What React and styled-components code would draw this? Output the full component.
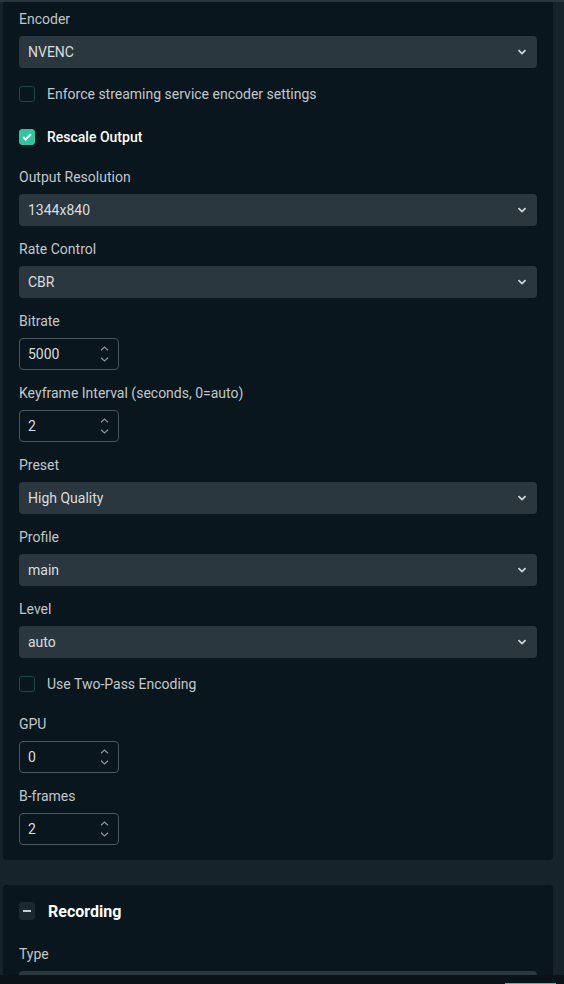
import React from 'react';
import styled, { createGlobalStyle } from 'styled-components';

const GlobalStyle = createGlobalStyle`
  html, body {
    margin: 0;
    padding: 0;
    background: #17232b;
    font-family: Roboto, "Liberation Sans", sans-serif;
  }
`;

const Page = styled.div`
  height: 984px;
  width: 564px;
  display: flex;
  flex-direction: column;
  overflow: hidden;
  background: #17232b;
`;

const TopBand = styled.div`
  height: 2px;
  flex-shrink: 0;
  background: #2a363e;
`;

const Scroll = styled.div`
  flex: 1;
  overflow: hidden;
  padding: 0 11px 0 3px;
  display: flex;
  flex-direction: column;
  gap: 25px;
`;

const Card = styled.section`
  background: #09161d;
  border-radius: ${p => (p.$flatTop ? '0 0 4px 4px' : '4px')};
  padding: ${p => (p.$flatTop ? '8px' : '17px')} 16px 1px;
  display: flex;
  flex-direction: column;
  flex-shrink: 0;
`;

const Field = styled.div`
  display: flex;
  flex-direction: column;
  margin-bottom: 14px;
`;

const Label = styled.div`
  font-size: 14px;
  line-height: 17px;
  padding-top: 1px;
  color: #c2c7ca;
  margin-bottom: 8px;
`;

const SelectBox = styled.div`
  height: 32px;
  border-radius: 4px;
  background: #2b373f;
  display: flex;
  align-items: center;
  justify-content: space-between;
  padding: 0 10px 0 9px;
  font-size: 14px;
  color: #d9dddf;
`;

const SpinBox = styled.div`
  width: 100px;
  height: 32px;
  box-sizing: border-box;
  border: 1px solid #4a565d;
  border-radius: 4px;
  display: flex;
  align-items: center;
  justify-content: space-between;
  padding: 0 9px 0 8px;
  font-size: 14px;
  color: #d9dddf;
`;

const Arrows = styled.div`
  display: flex;
  flex-direction: column;
  gap: 6px;
`;

const CheckRow = styled.label`
  display: flex;
  align-items: center;
  height: 24px;
  margin-bottom: 19px;
  gap: 12px;
  font-size: 14px;
  color: ${p => (p.$checked ? '#ffffff' : '#c3c8cb')};
  font-weight: ${p => (p.$checked ? 500 : 400)};
`;

const Box = styled.span`
  width: 16px;
  height: 16px;
  box-sizing: border-box;
  border-radius: 3px;
  border: 1px solid ${p => (p.$checked ? '#31c3a2' : '#1d4a43')};
  background: ${p => (p.$checked ? '#31c3a2' : 'transparent')};
  display: flex;
  align-items: center;
  justify-content: center;
`;

const Header = styled.div`
  display: flex;
  align-items: center;
  gap: 13px;
  height: 18px;
  margin-bottom: 25px;
  font-size: 16px;
  font-weight: 700;
  color: #ffffff;
`;

const Collapse = styled.span`
  width: 16px;
  height: 18px;
  border-radius: 3px;
  background: #1c2830;
  display: flex;
  align-items: center;
  justify-content: center;
  &::after {
    content: '';
    width: 8px;
    height: 2px;
    background: #c9ced1;
  }
`;

const Footer = styled.div`
  height: 9px;
  flex-shrink: 0;
  background: #0b1318;
  display: flex;
  justify-content: flex-end;
  align-items: flex-end;
  padding-right: 8px;
`;

const FooterButton = styled.div`
  width: 51px;
  height: 1px;
  background: #31c3a2;
`;

const Chevron = () => (
  <svg width="10" height="6" viewBox="0 0 10 6">
    <path d="M1.5 1.2 L5 4.6 L8.5 1.2" fill="none" stroke="#d4d8da" strokeWidth="1.8" />
  </svg>
);

const Select = ({ label, value }) => (
  <Field>
    <Label>{label}</Label>
    <SelectBox>
      <span>{value}</span>
      <Chevron />
    </SelectBox>
  </Field>
);

const Spin = ({ label, value }) => (
  <Field>
    <Label>{label}</Label>
    <SpinBox>
      <span>{value}</span>
      <Arrows>
        <svg width="9" height="5" viewBox="0 0 9 5">
          <path d="M1 4.2 L4.5 1 L8 4.2" fill="none" stroke="#8b9397" strokeWidth="1.2" />
        </svg>
        <svg width="9" height="5" viewBox="0 0 9 5">
          <path d="M1 0.8 L4.5 4 L8 0.8" fill="none" stroke="#8b9397" strokeWidth="1.2" />
        </svg>
      </Arrows>
    </SpinBox>
  </Field>
);

const Checkbox = ({ label, checked }) => (
  <CheckRow $checked={checked}>
    <Box $checked={checked}>
      {checked && (
        <svg width="10" height="8" viewBox="0 0 10 8">
          <path d="M1.2 4 L3.8 6.5 L8.8 1.3" fill="none" stroke="#ffffff" strokeWidth="2" />
        </svg>
      )}
    </Box>
    {label}
  </CheckRow>
);

export default function App() {
  return (
    <Page>
      <GlobalStyle />
      <TopBand />
      <Scroll>
        <Card $flatTop>
          <Select label="Encoder" value="NVENC" />
          <Checkbox label="Enforce streaming service encoder settings" />
          <Checkbox label="Rescale Output" checked />
          <Select label="Output Resolution" value="1344x840" />
          <Select label="Rate Control" value="CBR" />
          <Spin label="Bitrate" value="5000" />
          <Spin label="Keyframe Interval (seconds, 0=auto)" value="2" />
          <Select label="Preset" value="High Quality" />
          <Select label="Profile" value="main" />
          <Select label="Level" value="auto" />
          <Checkbox label="Use Two-Pass Encoding" />
          <Spin label="GPU" value="0" />
          <Spin label="B-frames" value="2" />
        </Card>
        <Card>
          <Header>
            <Collapse />
            Recording
          </Header>
          <Select label="Type" value="" />
        </Card>
      </Scroll>
      <Footer>
        <FooterButton />
      </Footer>
    </Page>
  );
}
